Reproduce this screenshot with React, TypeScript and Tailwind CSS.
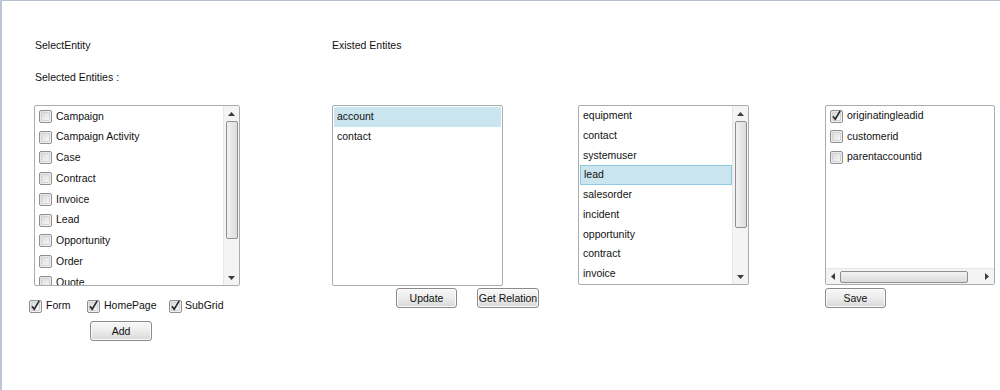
import React from "react";

const font = { fontFamily: '"Liberation Sans", Arial, sans-serif' };

const CheckBox = ({ checked = false }: { checked?: boolean }) => (
    <span className="relative inline-flex w-[13px] h-[13px] shrink-0 rounded-[2px] border border-[#8f8f8f] bg-gradient-to-br from-[#e4e4e4] to-[#f7f7f7]">
        <span className="m-[1px] flex-1 rounded-[1px] border border-[#d2d2d2] bg-gradient-to-br from-[#dcdcdc] to-[#f6f6f6]" />
        {checked && (
            <svg viewBox="0 0 13 13" className="absolute -left-px -top-[2px] w-[13px] h-[13px]">
                <path d="M3 7.2 L5.2 10.2 L10.2 1.8" fill="none" stroke="#2a2a2a" strokeWidth="1.6" />
            </svg>
        )}
    </span>
);

const Button = ({ label, width }: { label: string; width: string }) => (
    <button className={`${width} h-[20px] px-0 whitespace-nowrap rounded-[3px] border border-[#8a8a8a] bg-gradient-to-b from-[#f8f8f8] via-[#ececec] to-[#d8d8d8] text-[10.5px] text-[#111] leading-none shadow-[inset_0_0_0_1px_#fcfcfc]`}>
        {label}
    </button>
);

const VScroll = ({ thumb }: { thumb: string }) => (
    <div className="w-[16px] h-full flex flex-col items-center bg-[#f4f4f4] border-l border-[#e6e6e6]">
        <div className="h-[15px] flex items-center justify-center">
            <svg viewBox="0 0 7 4" className="w-[7px] h-[4px]"><path d="M0 4 L3.5 0 L7 4Z" fill="#3c3c3c" /></svg>
        </div>
        <div className={`${thumb} w-[12px] rounded-[2px] border border-[#8e8f8f] bg-gradient-to-r from-[#f2f2f2] to-[#dcdcdc]`} />
        <div className="flex-1" />
        <div className="h-[15px] flex items-center justify-center">
            <svg viewBox="0 0 7 4" className="w-[7px] h-[4px]"><path d="M0 0 L3.5 4 L7 0Z" fill="#3c3c3c" /></svg>
        </div>
    </div>
);

const entities = ["Campaign", "Campaign Activity", "Case", "Contract", "Invoice", "Lead", "Opportunity", "Order", "Quote"];
const existed = ["equipment", "contact", "systemuser", "lead", "salesorder", "incident", "opportunity", "contract", "invoice"];
const fields = [
    { name: "originatingleadid", checked: true },
    { name: "customerid", checked: false },
    { name: "parentaccountid", checked: false },
];

export default function App() {
    return (
        <div style={font} className="w-[1000px] h-[390px] bg-white border-t border-t-[#b7c1cf] border-l-2 border-l-[#bcc6d3] text-[10.5px] text-[#111] flex items-start pt-[37px] overflow-hidden">
            {/* select entity column */}
            <div className="ml-[32px] w-[206px] flex flex-col">
                <div className="h-[14px] leading-[14px] pl-px">SelectEntity</div>
                <div className="h-[14px] leading-[14px] pl-px mt-[18px]">Selected Entities :</div>
                <div className="mt-[21px] h-[181px] rounded-[2px] border border-[#a9acb0] flex overflow-hidden">
                    <div className="flex-1 overflow-hidden">
                        {entities.map((e) => (
                            <div key={e} className="h-[20.75px] flex items-center gap-[4px] pl-[4px]">
                                <CheckBox />
                                <span>{e}</span>
                            </div>
                        ))}
                    </div>
                    <VScroll thumb="h-[118px]" />
                </div>
                <div className="-ml-[5px] mt-[13px] flex items-center h-[14px]">
                    <div className="w-[58px] flex items-center gap-[4px]"><CheckBox checked /><span>Form</span></div>
                    <div className="w-[82px] flex items-center gap-[4px]"><CheckBox checked /><span>HomePage</span></div>
                    <div className="flex items-center gap-[3px]"><CheckBox checked /><span>SubGrid</span></div>
                </div>
                <div className="ml-[56px] mt-[8px]">
                    <Button label="Add" width="w-[62px]" />
                </div>
            </div>

            {/* existed entities column */}
            <div className="ml-[92px] w-[207px] flex flex-col">
                <div className="h-[14px] leading-[14px]">Existed Entites</div>
                <div className="mt-[53px] w-[171px] h-[181px] rounded-[2px] border border-[#a9acb0] p-px">
                    <div className="h-[20px] flex items-center pl-[3px] bg-[#cbe5ee]">account</div>
                    <div className="h-[20px] flex items-center pl-[3px]">contact</div>
                </div>
                <div className="mt-[2px] ml-[64px] flex gap-[20px]">
                    <Button label="Update" width="w-[61px]" />
                    <Button label="Get Relation" width="w-[62px]" />
                </div>
            </div>

            {/* relation list column */}
            <div className="ml-[39px] mt-[67px] w-[171px] h-[180px] rounded-[2px] border border-[#a9acb0] flex overflow-hidden">
                <div className="flex-1 overflow-hidden">
                    {existed.map((e) => (
                        <div
                            key={e}
                            className={
                                e === "lead"
                                    ? "h-[19.75px] flex items-center pl-[3px] ml-px border border-[#8fcbe0] bg-[#cbe5ee]"
                                    : "h-[19.75px] flex items-center pl-[4px]"
                            }
                        >
                            {e}
                        </div>
                    ))}
                </div>
                <VScroll thumb="h-[107px]" />
            </div>

            {/* attribute column */}
            <div className="ml-[76px] mt-[67px] w-[170px] flex flex-col">
                <div className="h-[180px] rounded-[2px] border border-[#a9acb0] flex flex-col overflow-hidden">
                    <div className="flex-1">
                        {fields.map((f) => (
                            <div key={f.name} className="h-[20.5px] flex items-center gap-[4px] pl-[4px]">
                                <CheckBox checked={f.checked} />
                                <span>{f.name}</span>
                            </div>
                        ))}
                    </div>
                    <div className="h-[16px] flex items-center bg-[#f4f4f4] border-t border-[#e6e6e6]">
                        <div className="w-[14px] flex items-center justify-center">
                            <svg viewBox="0 0 4 7" className="w-[4px] h-[7px]"><path d="M4 0 L0 3.5 L4 7Z" fill="#3c3c3c" /></svg>
                        </div>
                        <div className="w-[128px] h-[12px] rounded-[2px] border border-[#8e8f8f] bg-gradient-to-b from-[#f2f2f2] to-[#dcdcdc]" />
                        <div className="flex-1" />
                        <div className="w-[14px] flex items-center justify-center">
                            <svg viewBox="0 0 4 7" className="w-[4px] h-[7px]"><path d="M0 0 L4 3.5 L0 7Z" fill="#3c3c3c" /></svg>
                        </div>
                    </div>
                </div>
                <div className="mt-[3px]">
                    <Button label="Save" width="w-[61px]" />
                </div>
            </div>
        </div>
    );
}
